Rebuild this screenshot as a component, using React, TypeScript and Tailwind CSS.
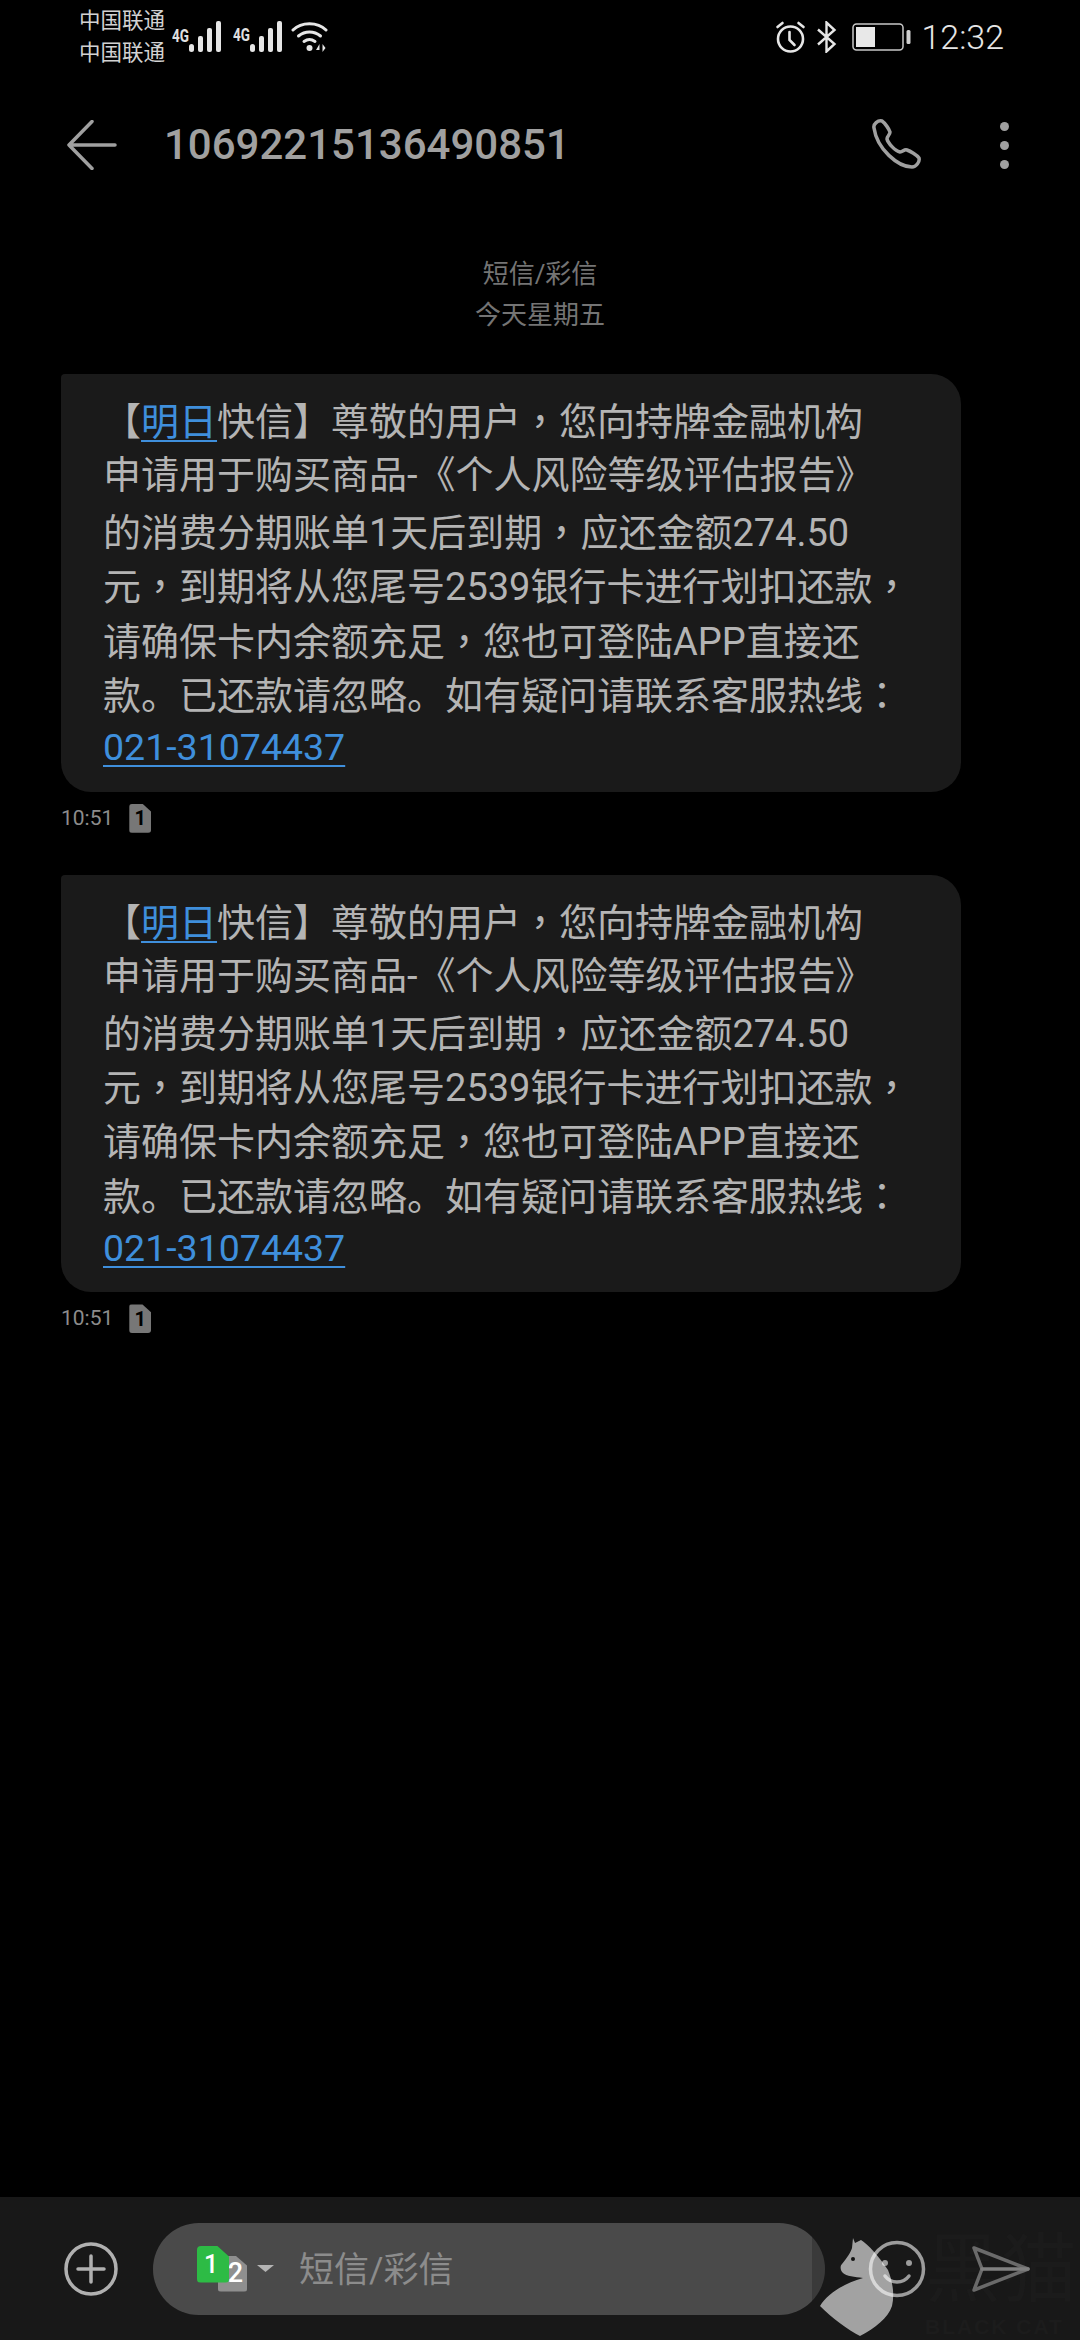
const cjk = "font-['Roboto','Noto_Sans_CJK_SC',sans-serif]";

const Mark = ({ children }: { children: string }) => (
  <span className="font-['Noto_Sans_CJK_TC',sans-serif]">{children}</span>
);

const Link = ({ children }: { children: string }) => (
  <span className="text-[#3f8fdc] underline decoration-2 underline-offset-[5px]">{children}</span>
);

const Line = ({ children }: { children: React.ReactNode }) => (
  <div className="h-[54.4px] leading-[54.4px] whitespace-nowrap">{children}</div>
);

const SignalBars = () => (
  <svg width="32" height="31" viewBox="0 0 32 31" fill="#e6e6e6">
    <rect x="0" y="23" width="5" height="8" rx="2.5" />
    <rect x="9" y="15" width="5" height="16" rx="2" />
    <rect x="18" y="7" width="5" height="24" rx="2" />
    <rect x="27" y="0" width="5" height="31" rx="2" />
  </svg>
);

const FourG = () => (
  <span className="font-['Roboto',sans-serif] font-bold text-[18px] leading-none text-[#e0e0e0] w-[17px] inline-block scale-x-75 origin-left whitespace-nowrap">
    4G
  </span>
);

const Wifi = () => (
  <svg width="37" height="32" viewBox="0 0 36 32" fill="none" stroke="#e6e6e6" strokeWidth="3" strokeLinecap="round">
    <path d="M1.5 9C10 .5 26 .5 34.500 9" />
    <path d="M7 15c6.500-5.500 15.500-5.500 22 0" />
    <path d="M12.500 20.500c3.500-2.500 7.500-2.500 11 0" />
    <circle cx="18" cy="27" r="3" fill="#e6e6e6" stroke="none" />
    <path d="M28 23l-3.500 6h3.500zM31 23v8l3-4z" fill="#e6e6e6" stroke="none" />
  </svg>
);

const Alarm = () => (
  <svg width="31" height="32" viewBox="0 0 30 32" fill="none" stroke="#e6e6e6" strokeWidth="2.600" strokeLinecap="round">
    <circle cx="15" cy="18" r="12.500" />
    <path d="M14 11v8l5 5" />
    <path d="M2 6l5-4M28 6l-5-4" />
  </svg>
);

const Bluetooth = () => (
  <svg width="21" height="32" viewBox="0 0 20 32" fill="none" stroke="#e6e6e6" strokeWidth="2.400">
    <path d="M1.500 8.500L18 23 10 30.500V1.500L18 9 1.500 23.500" />
  </svg>
);

const Battery = () => (
  <svg width="59" height="28" viewBox="0 0 59 28" fill="none">
    <rect x="1" y="1" width="50" height="26" rx="3.500" stroke="#c8c8c8" strokeWidth="1.500" />
    <rect x="4" y="4" width="19" height="20" fill="#e8e8e8" />
    <rect x="54.500" y="7" width="4" height="14" rx="1.500" fill="#d0d0d0" />
  </svg>
);

const SimOne = () => (
  <div className="w-[22px] h-[29px] rounded-[3px] [clip-path:polygon(0_0,60%_0,100%_28%,100%_100%,0_100%)] bg-[#777] flex items-center justify-center">
    <span className="font-['Roboto',sans-serif] font-bold text-[20px] leading-none text-black">1</span>
  </div>
);

const Bubble = () => (
  <div className={`w-[900px] rounded-[30px] rounded-tl-[4px] bg-[#1a1a1a] pt-[20px] pb-[17px] pl-[42px] text-[38px] text-[#b4b4b4] ${cjk}`}>
    <div className="h-[54.4px] leading-[50.4px] whitespace-nowrap"><Mark>【</Mark><Link>明日</Link>快信<Mark>】</Mark>尊敬的用户<Mark>，</Mark>您向持牌金融机构</div>
    <Line>申请用于购买商品-《个人风险等级评估报告》</Line>
    <Line>的消费分期账单1天后到期<Mark>，</Mark>应还金额274.50</Line>
    <Line>元<Mark>，</Mark>到期将从您尾号2539银行卡进行划扣还款<Mark>，</Mark></Line>
    <Line>请确保卡内余额充足<Mark>，</Mark>您也可登陆APP直接还</Line>
    <Line>款。已还款请忽略。如有疑问请联系客服热线<Mark>：</Mark></Line>
    <div className="h-[54.4px] leading-[54.4px] text-[37.5px]"><Link>021-31074437</Link></div>
  </div>
);

const Message = () => (
  <div>
    <Bubble />
    <div className="h-[83px] pt-[12px] flex items-start gap-[16px]">
      <span className="font-['Roboto',sans-serif] text-[21px] leading-[29px] text-[#8c8c8c]">10:51</span>
      <SimOne />
    </div>
  </div>
);

const Cat = () => (
  <svg width="74" height="98" viewBox="0 0 74 98" fill="#ffffff" fillOpacity="0.6">
    <path d="M33 0l2 5 6-3C48 6 60 20 68 32 72 42 75 55 72 68 68 80 55 90 40 98 28 92 12 80 0 68 8 55 25 45 43 40 35 39 26 38 23 35 20 32 20 28 22 26 27 20 31 14 32 10z" />
    <circle cx="33" cy="21" r="2" fill="#111" fillOpacity="1" />
  </svg>
);

const Smiley = () => (
  <svg width="58" height="58" viewBox="0 0 58 58" fill="none" stroke="#9c9c9c" strokeWidth="3.500" strokeLinecap="round">
    <circle cx="29" cy="29" r="26.500" />
    <circle cx="17" cy="23" r="3" fill="#9c9c9c" stroke="none" />
    <circle cx="41" cy="23" r="3" fill="#9c9c9c" stroke="none" />
    <path d="M17 36c6 8 18 8 24 0" />
  </svg>
);

const SendIcon = () => (
  <svg width="60" height="48" viewBox="0 0 60 48" fill="none" stroke="#6a6a6a" strokeWidth="3.500" strokeLinejoin="round" strokeLinecap="round">
    <path d="M3 3l54 21L3 45l8-21z" />
    <path d="M11 24h46" stroke="#808080" />
  </svg>
);

const App = () => {
  return (
    <div className={`relative w-[1080px] h-[2340px] bg-black flex flex-col overflow-hidden ${cjk}`}>
      {/* status bar */}
      <div className="h-[73px] flex items-start pt-[5px] pl-[79px] pr-[76px]">
        <div className="text-[21.5px] leading-[32px] text-[#d2d2d2]">
          <div>中国联通</div>
          <div>中国联通</div>
        </div>
        <div className="flex items-start mt-[16px] ml-[7px]">
          <div className="mt-[4px]"><FourG /></div>
          <SignalBars />
          <div className="ml-[12px] mt-[3px]"><FourG /></div>
          <SignalBars />
          <div className="ml-[9px]"><Wifi /></div>
        </div>
        <div className="ml-auto flex items-center mt-[16px] h-[32px]">
          <Alarm />
          <div className="ml-[10px]"><Bluetooth /></div>
          <div className="ml-[15px]"><Battery /></div>
          <span className="ml-[10px] font-['Roboto',sans-serif] font-light text-[34px] leading-none text-[#e6e6e6]">12:32</span>
        </div>
      </div>

      {/* header */}
      <div className="h-[144px] flex items-center pl-[67px] pr-[71px]">
        <svg width="50" height="50" viewBox="0 0 50 50" fill="none" stroke="#a0a0a0" strokeWidth="3.500" strokeLinecap="round" strokeLinejoin="round">
          <path d="M25 1.500L2 25l23 23.500M2 25h46" />
        </svg>
        <span className="ml-[47px] font-['Roboto',sans-serif] font-medium text-[42px] leading-none text-[#a0a0a0]">10692215136490851</span>
        <div className="ml-auto flex items-center gap-[77px]">
          <svg width="52" height="52" viewBox="0 0 52 52" fill="none" stroke="#a0a0a0" strokeWidth="3.500" strokeLinejoin="round">
            <path d="M3 9c-1-4 4-8 8-7 3 2 7 8 8 11 0 3-3 4-3 7 1 4 8 12 13 13 3 0 4-3 7-2 3 1 10 5 12 8 1 4-3 9-7 9C27 48 6 30 3 9z" />
          </svg>
          <div className="flex flex-col gap-[10px]">
            <div className="w-[9px] h-[9px] rounded-full bg-[#a0a0a0]" />
            <div className="w-[9px] h-[9px] rounded-full bg-[#a0a0a0]" />
            <div className="w-[9px] h-[9px] rounded-full bg-[#a0a0a0]" />
          </div>
        </div>
      </div>

      {/* date */}
      <div className="mt-[37px] text-center text-[26px] leading-[41px] text-[#747474]">
        <div>短信/彩信</div>
        <div>今天星期五</div>
      </div>

      {/* messages */}
      <div className="mt-[38px] pl-[61px]">
        <Message />
        <Message />
      </div>

      {/* input bar */}
      <div className="mt-auto h-[143px] bg-[#181818] flex items-center pl-[64px]">
        <svg width="54" height="54" viewBox="0 0 54 54" fill="none" stroke="#b0b0b0" strokeWidth="3.500" strokeLinecap="round">
          <circle cx="27" cy="27" r="25" />
          <path d="M27 14v26M14 27h26" />
        </svg>
        <div className="ml-[35px] w-[672px] h-[92px] rounded-[46px] bg-[linear-gradient(to_right,#4a4a4a_659px,#3a3a3a_659px)] flex items-center pl-[44px]">
          <div className="relative w-[50px] h-[46px]">
            <div className="absolute left-[21px] top-[10px] w-[29px] h-[36px] rounded-[3px] [clip-path:polygon(0_0,60%_0,100%_28%,100%_100%,0_100%)] bg-[#8f8f8f] flex items-center justify-center pl-[6px]">
              <span className="font-['Roboto',sans-serif] font-medium text-[27px] leading-none text-white">2</span>
            </div>
            <div className="absolute left-0 top-0 w-[32px] h-[37px] rounded-[4px] [clip-path:polygon(0_0,62%_0,100%_30%,100%_100%,0_100%)] bg-[#2dbb45] flex items-center justify-center pr-[4px]">
              <span className="font-['Roboto',sans-serif] font-medium text-[25px] leading-none text-white">1</span>
            </div>
          </div>
          <svg className="ml-[10px]" width="17" height="7" viewBox="0 0 17 7" fill="#b4b4b4">
            <path d="M0 0h17L8.500 7z" />
          </svg>
          <span className="ml-[25px] mt-[4px] text-[35px] leading-none text-[#8c8c8c]">短信/彩信</span>
        </div>
        <div className="ml-[43px]"><Smiley /></div>
        <div className="ml-[45px] relative z-10"><SendIcon /></div>
      </div>

      {/* watermark */}
      <div className="absolute left-[820px] top-[2238px]">
        <Cat />
      </div>
      <div className="absolute left-[925px] top-[2232px] text-[76px] leading-none text-[#1b1b1b] whitespace-nowrap">
        黑猫
      </div>
      <div className="absolute left-[925px] top-[2316px] font-['Liberation_Sans',sans-serif] font-bold text-[21px] leading-none tracking-[2px] text-[#1c1c1c] whitespace-nowrap">
        BLACK CAT
      </div>
    </div>
  );
};

export default App;
